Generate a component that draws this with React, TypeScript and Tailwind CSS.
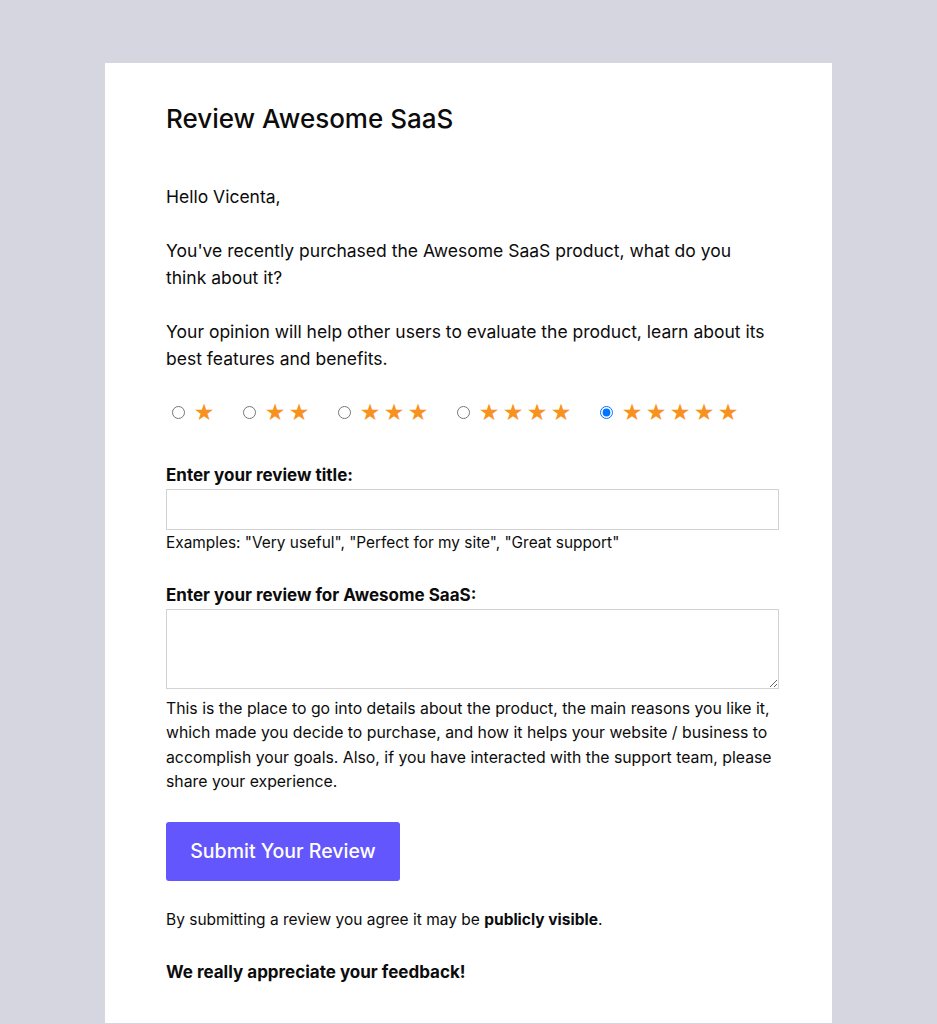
import React from "react"

const ratings = [1, 2, 3, 4, 5]

export default function App() {
    return (
        <div className="min-h-screen bg-[#d6d6e0] pt-[63px] font-['Inter',sans-serif] text-[#0c0c0c]">
            <div className="mx-auto w-[727px] bg-white pl-[61px] pr-[53px] pt-[40px] pb-[40px]">
                <h1 className="text-[26px] font-medium leading-[32px]">Review Awesome SaaS</h1>

                <div className="max-w-[600px] text-[17.5px] leading-[27px]">
                    <p className="mt-[48px]">Hello Vicenta,</p>
                    <p className="mt-[27px]">
                        You've recently purchased the Awesome SaaS product, what do you think about it?
                    </p>
                    <p className="mt-[27px]">
                        Your opinion will help other users to evaluate the product, learn about its best features and benefits.
                    </p>
                </div>

                <div className="mt-[28px] flex items-center">
                    {ratings.map((r) => (
                        <label key={r} className="mr-[21px] flex items-center">
                            <input type="radio" name="rating" defaultChecked={r === 5} className="m-0 ml-[6px] mr-[7px] h-[13px] w-[13px]" />
                            {Array.from({ length: r }).map((_, i) => (
                                <span key={i} className="w-[24px] text-center font-['DejaVu_Sans',sans-serif] text-[23px] leading-[24px] text-[#f7921e]">★</span>
                            ))}
                        </label>
                    ))}
                </div>

                <label className="mt-[41px] block text-[17px] font-bold leading-[20px]">Enter your review title:</label>
                <input type="text" className="mt-[4px] block h-[41px] w-full border border-[#d3d3d3] outline-none" />
                <p className="mt-[2px] text-[15.4px] leading-[22px]">Examples: "Very useful", "Perfect for my site", "Great support"</p>

                <label className="mt-[31px] block text-[17px] font-bold leading-[20px]">Enter your review for Awesome SaaS:</label>
                <textarea className="mt-[4px] block h-[80px] w-full border border-[#d3d3d3] outline-none" />
                <p className="mt-[8px] text-[15.8px] leading-[24.4px]">
                    This is the place to go into details about the product, the main reasons you like it, which made you decide to purchase, and how it helps your website / business to accomplish your goals. Also, if you have interacted with the support team, please share your experience.
                </p>

                <button className="mt-[27px] h-[59px] w-[234px] rounded-[3px] bg-[#6356fd] text-[19.5px] font-medium text-white">
                    Submit Your Review
                </button>

                <p className="mt-[28px] text-[15.5px] leading-[22px]">
                    By submitting a review you agree it may be <b>publicly visible</b>.
                </p>
                <p className="mt-[30px] text-[17px] font-bold leading-[22px]">We really appreciate your feedback!</p>
            </div>
        </div>
    )
}
